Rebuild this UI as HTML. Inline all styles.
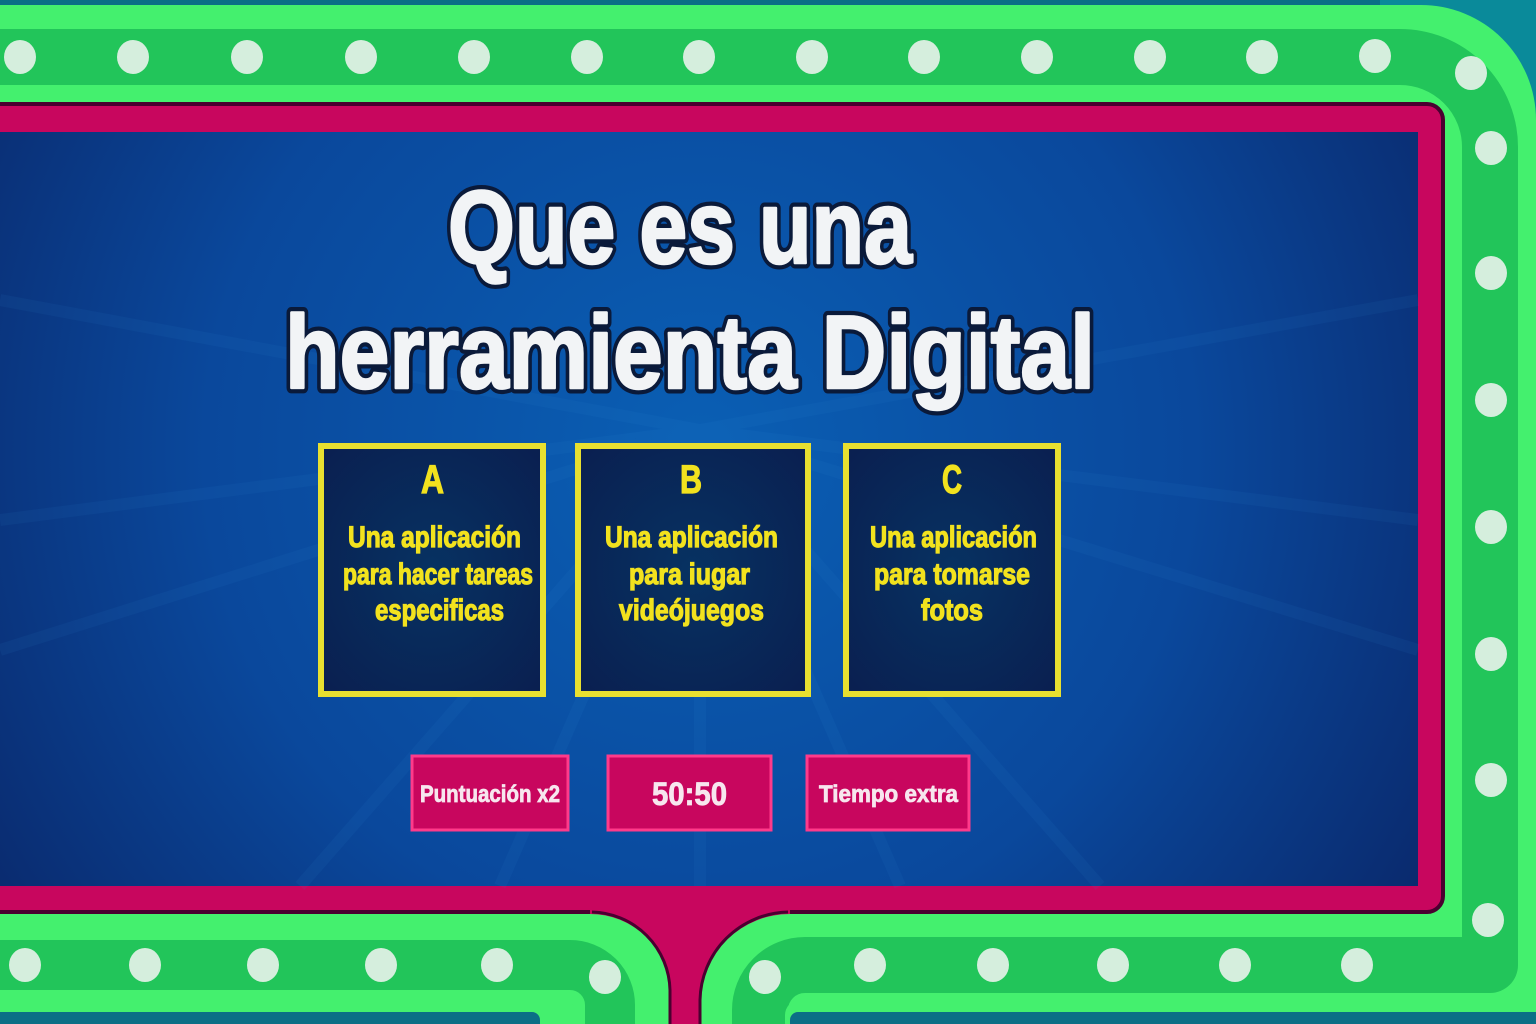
<!DOCTYPE html>
<html><head><meta charset="utf-8"><style>html,body{margin:0;padding:0;background:#0b6f86}svg{display:block}</style></head><body>
<svg width="1536" height="1024" viewBox="0 0 1536 1024" xmlns="http://www.w3.org/2000/svg" font-family="Liberation Sans, sans-serif" font-weight="bold">
<defs>
<radialGradient id="bg" cx="700" cy="450" r="900" gradientUnits="userSpaceOnUse">
<stop offset="0" stop-color="#0a5fb4"/><stop offset="0.55" stop-color="#0a489c"/><stop offset="1" stop-color="#0a2566"/></radialGradient>
<radialGradient id="tb" cx="0.5" cy="0.5" r="0.7"><stop offset="0" stop-color="#073262"/><stop offset="1" stop-color="#0a1f50"/></radialGradient>
</defs>
<rect width="1536" height="1024" fill="#0b6f86"/>
<rect x="1380" y="0" width="156" height="160" fill="#0a8a9a"/>
<path d="M-20 5 H1420 A115 115 0 0 1 1536 120 V1024 H-20 Z" fill="#44f06e"/>
<path d="M-20 910 H590 A80 80 0 0 1 670 990 V1024 H-20 Z" fill="#44f06e"/>
<path d="M790 910 H1536 V1024 H700 V1000 A90 90 0 0 1 790 910 Z" fill="#44f06e"/>
<path d="M-20 57 H1400 A90 90 0 0 1 1490 147 V965 H805 A45 45 0 0 0 760 1010 V1030" fill="none" stroke="#22c55a" stroke-width="56" stroke-linejoin="round"/>
<path d="M-20 965 H570 A40 40 0 0 1 610 1005 V1030" fill="none" stroke="#22c55a" stroke-width="50"/>
<path d="M-20 1000 H560 A20 20 0 0 1 580 1020 V1030 H-20Z" fill="#44f06e"/>
<rect x="-20" y="1012" width="560" height="20" rx="8" fill="#0b6f86"/>
<path d="M800 1000 H1536 V1030 H785 V1015 A15 15 0 0 1 800 1000Z" fill="#44f06e"/>
<rect x="790" y="1012" width="760" height="20" rx="8" fill="#0b6f86"/>
<rect x="-20" y="104" width="1463" height="808" rx="16" fill="#c8065e" stroke="#4a0030" stroke-width="4"/>
<path d="M590 900 H790 V914 A90 90 0 0 0 700 1000 V1024 H670 V990 A80 80 0 0 0 590 914 Z" fill="#c8065e"/>
<path d="M592 912 A80 80 0 0 1 670 990 V1024 M700 1024 V1000 A90 90 0 0 1 788 912" fill="none" stroke="#4a0030" stroke-width="3"/>
<rect x="-5" y="132" width="1423" height="754" fill="url(#bg)"/>
<g stroke="#3a9ae8" stroke-opacity="0.07" stroke-width="12">
<path d="M700 430 L0 300 M700 430 L0 520 M700 430 L0 650 M700 430 L1418 300 M700 430 L1418 520 M700 430 L1418 650 M700 430 L300 886 M700 430 L1100 886 M700 430 L700 886 M700 430 L500 886 M700 430 L900 886"/>
</g>
<g fill="#d5eedd">
<ellipse cx="20" cy="57" rx="16" ry="17"/><ellipse cx="133" cy="57" rx="16" ry="17"/><ellipse cx="247" cy="57" rx="16" ry="17"/><ellipse cx="361" cy="57" rx="16" ry="17"/><ellipse cx="474" cy="57" rx="16" ry="17"/><ellipse cx="587" cy="57" rx="16" ry="17"/><ellipse cx="699" cy="57" rx="16" ry="17"/><ellipse cx="812" cy="57" rx="16" ry="17"/><ellipse cx="924" cy="57" rx="16" ry="17"/><ellipse cx="1037" cy="57" rx="16" ry="17"/><ellipse cx="1150" cy="57" rx="16" ry="17"/><ellipse cx="1262" cy="57" rx="16" ry="17"/><ellipse cx="1375" cy="56" rx="16" ry="17"/><ellipse cx="1471" cy="73" rx="16" ry="17"/>
<ellipse cx="1491" cy="148" rx="16" ry="17"/><ellipse cx="1491" cy="273" rx="16" ry="17"/><ellipse cx="1491" cy="400" rx="16" ry="17"/><ellipse cx="1491" cy="527" rx="16" ry="17"/><ellipse cx="1491" cy="654" rx="16" ry="17"/><ellipse cx="1491" cy="780" rx="16" ry="17"/><ellipse cx="1488" cy="920" rx="16" ry="17"/>
<ellipse cx="25" cy="965" rx="16" ry="17"/><ellipse cx="145" cy="965" rx="16" ry="17"/><ellipse cx="263" cy="965" rx="16" ry="17"/><ellipse cx="381" cy="965" rx="16" ry="17"/><ellipse cx="497" cy="965" rx="16" ry="17"/><ellipse cx="605" cy="977" rx="16" ry="17"/>
<ellipse cx="765" cy="977" rx="16" ry="17"/><ellipse cx="870" cy="965" rx="16" ry="17"/><ellipse cx="993" cy="965" rx="16" ry="17"/><ellipse cx="1113" cy="965" rx="16" ry="17"/><ellipse cx="1235" cy="965" rx="16" ry="17"/><ellipse cx="1357" cy="965" rx="16" ry="17"/>
</g>
<g font-size="104" stroke-linejoin="round">
<g fill="#0a1a3a" stroke="#0a1a3a" stroke-width="11">
<text x="448" y="263" textLength="464" lengthAdjust="spacingAndGlyphs">Que es una</text>
<text x="285" y="388" textLength="810" lengthAdjust="spacingAndGlyphs">herramienta Digital</text>
</g>
<g fill="#f2f4f6" stroke="#f2f4f6" stroke-width="2.5">
<text x="448" y="263" textLength="464" lengthAdjust="spacingAndGlyphs">Que es una</text>
<text x="285" y="388" textLength="810" lengthAdjust="spacingAndGlyphs">herramienta Digital</text>
</g>
</g>
<g fill="url(#tb)" stroke="#e8e030" stroke-width="6">
<rect x="321" y="446" width="222" height="248"/>
<rect x="578" y="446" width="230" height="248"/>
<rect x="846" y="446" width="212" height="248"/>
</g>
<g fill="#f2e21e" stroke="#f2e21e" stroke-width="1.2" font-size="30">
<text x="421" y="493" font-size="40" textLength="23" lengthAdjust="spacingAndGlyphs">A</text>
<text x="348" y="547" textLength="173" lengthAdjust="spacingAndGlyphs">Una aplicación</text>
<text x="343" y="584" textLength="190" lengthAdjust="spacingAndGlyphs">para hacer tareas</text>
<text x="375" y="620" textLength="129" lengthAdjust="spacingAndGlyphs">especificas</text>
<text x="680" y="493" font-size="40" textLength="22" lengthAdjust="spacingAndGlyphs">B</text>
<text x="605" y="547" textLength="173" lengthAdjust="spacingAndGlyphs">Una aplicación</text>
<text x="629" y="584" textLength="121" lengthAdjust="spacingAndGlyphs">para iugar</text>
<text x="619" y="620" textLength="145" lengthAdjust="spacingAndGlyphs">videójuegos</text>
<text x="942" y="493" font-size="40" textLength="20" lengthAdjust="spacingAndGlyphs">C</text>
<text x="870" y="547" textLength="167" lengthAdjust="spacingAndGlyphs">Una aplicación</text>
<text x="874" y="584" textLength="156" lengthAdjust="spacingAndGlyphs">para tomarse</text>
<text x="921" y="620" textLength="62" lengthAdjust="spacingAndGlyphs">fotos</text>
</g>
<g fill="#c8065e" stroke="#ff3a8a" stroke-width="3">
<rect x="412" y="756" width="156" height="74"/>
<rect x="608" y="756" width="163" height="74"/>
<rect x="807" y="756" width="162" height="74"/>
</g>
<g fill="#f7e6ee" stroke="#f7e6ee" stroke-width="0.8" font-size="24">
<text x="420" y="802" textLength="140" lengthAdjust="spacingAndGlyphs">Puntuación x2</text>
<text x="652" y="805" font-size="32" textLength="75" lengthAdjust="spacingAndGlyphs">50:50</text>
<text x="819" y="802" textLength="139" lengthAdjust="spacingAndGlyphs">Tiempo extra</text>
</g>
</svg>
</body></html>
